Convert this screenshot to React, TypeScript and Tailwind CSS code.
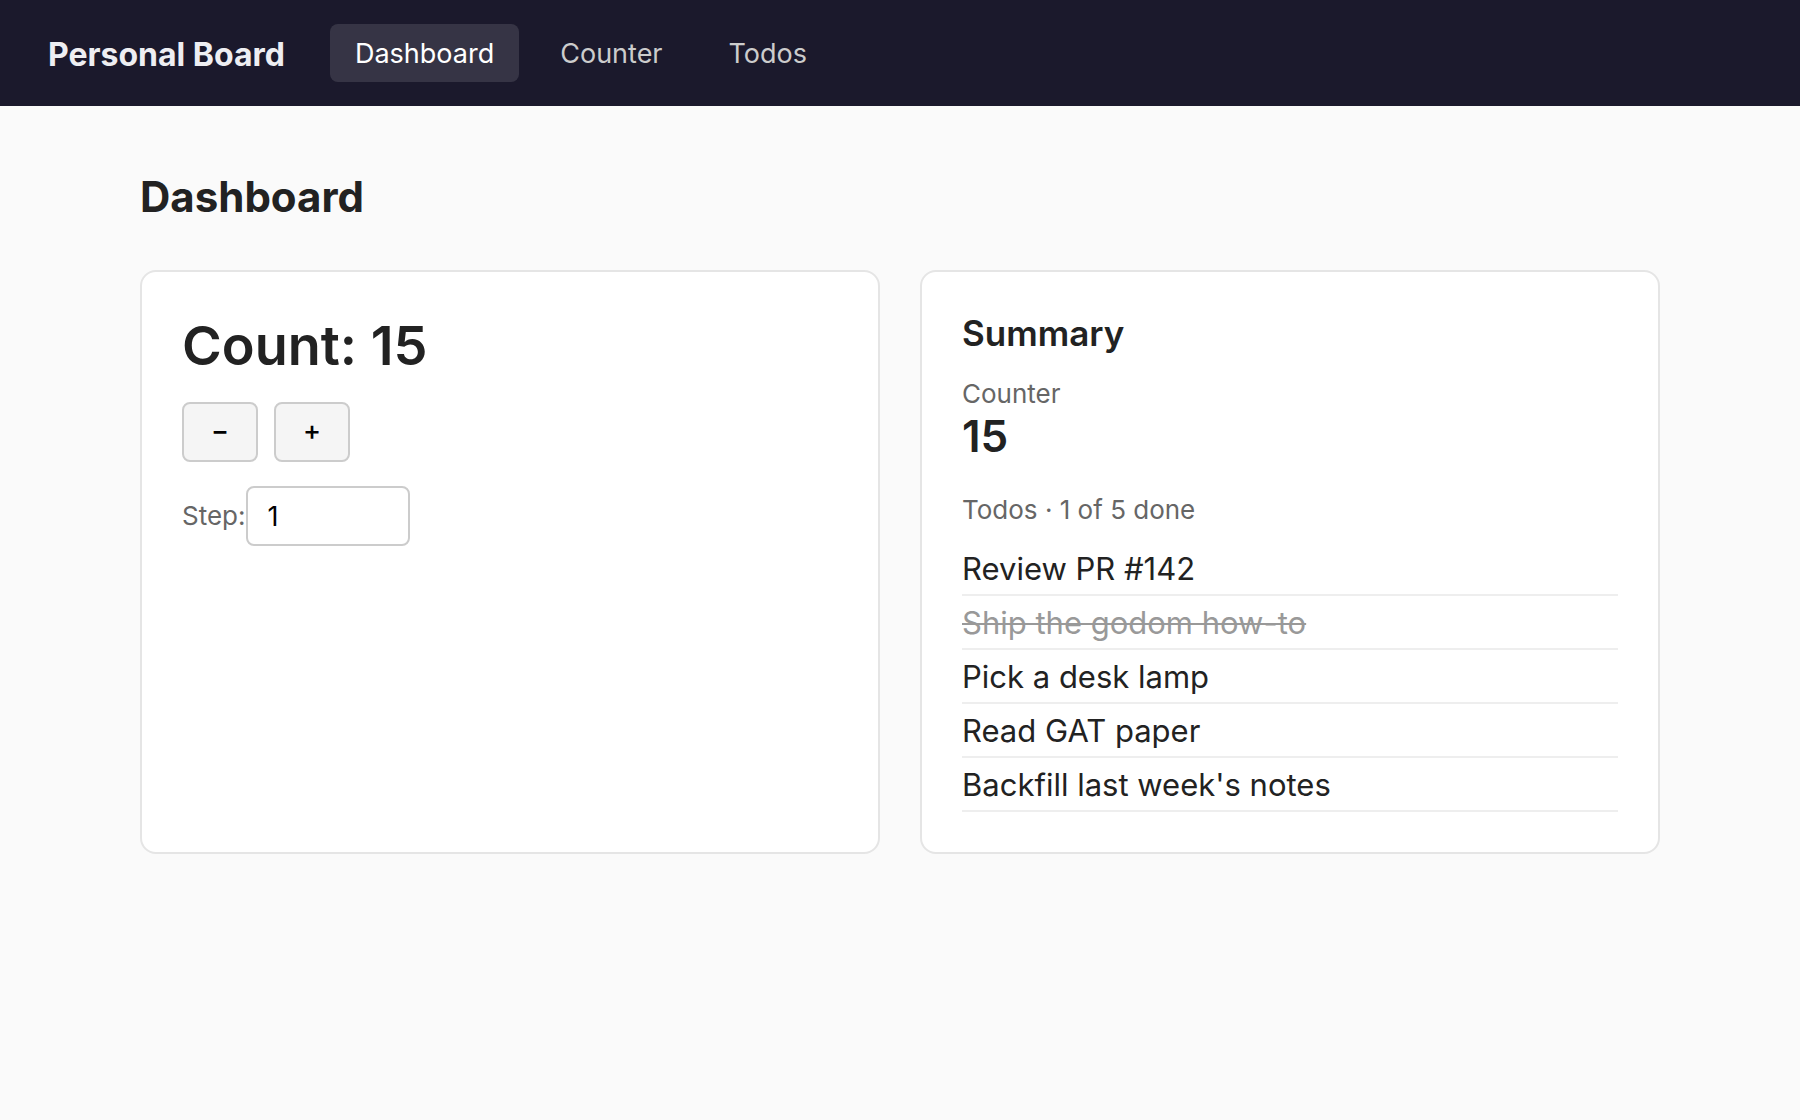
import { useState } from 'react';
import clsx from 'clsx';

const navItems = ['Dashboard', 'Counter', 'Todos'];

const todos = [
  { text: 'Review PR #142', done: false },
  { text: 'Ship the godom how-to', done: true },
  { text: 'Pick a desk lamp', done: false },
  { text: 'Read GAT paper', done: false },
  { text: "Backfill last week's notes", done: false },
];

const Navbar = () => (
  <nav className="flex items-center gap-[45px] bg-[#1b192c] px-12 py-6">
    <span className="pt-1 text-[32px] leading-[36px] font-bold text-[#eeeef2]">Personal Board</span>
    <div className="flex gap-4">
      {navItems.map((item) => (
        <a
          key={item}
          href={`#${item.toLowerCase()}`}
          className={clsx(
            'rounded-lg px-[25px] pt-[13px] pb-[11px] text-[27px] leading-[34px]',
            item === 'Dashboard' ? 'bg-white/12 text-white' : 'text-[#cccccc]'
          )}
        >
          {item}
        </a>
      ))}
    </div>
  </nav>
);

type CounterProps = {
  count: number;
  onChange: (count: number) => void;
};

const Counter = ({ count, onChange }: CounterProps) => {
  const [step, setStep] = useState(1);
  const buttonClass =
    'h-[60px] w-[76px] rounded-lg border-2 border-[#cccccc] bg-[#f5f5f5] pb-[2px] text-[27px] leading-[34px] font-medium text-black';

  return (
    <section className="rounded-2xl border-2 border-[#e5e5e5] bg-white p-10">
      <h2 className="mb-[22px] text-[54px] leading-[68px] font-semibold">Count: {count}</h2>
      <div className="mb-6 flex gap-4">
        <button type="button" aria-label="Decrease" className={buttonClass} onClick={() => onChange(count - step)}>
          −
        </button>
        <button type="button" aria-label="Increase" className={buttonClass} onClick={() => onChange(count + step)}>
          +
        </button>
      </div>
      <div className="flex items-center">
        <label htmlFor="step" className="text-[26px] leading-[32px] text-[#666666]">
          Step:
        </label>
        <input
          id="step"
          type="number"
          value={step}
          onChange={(e) => setStep(Number(e.target.value))}
          className="h-[60px] w-[164px] rounded-lg border-2 border-[#cccccc] bg-white px-5 text-[27px] leading-[34px] text-black"
        />
      </div>
    </section>
  );
};

const Summary = ({ count }: { count: number }) => {
  const done = todos.filter((todo) => todo.done).length;

  return (
    <section className="rounded-2xl border-2 border-[#e5e5e5] bg-white p-10">
      <h2 className="mb-6 text-[35px] leading-[42px] font-semibold">Summary</h2>
      <p className="text-[26px] leading-[32px] text-[#666666]">Counter</p>
      <p className="mb-8 text-[44px] leading-[52px] font-semibold">{count}</p>
      <p className="mb-4 text-[26px] leading-[32px] text-[#666666]">
        Todos · {done} of {todos.length} done
      </p>
      <ul>
        {todos.map((todo) => (
          <li
            key={todo.text}
            className={clsx(
              'border-b-2 border-[#eeeeee] pt-[9px] pb-[7px] text-[31px] leading-[36px]',
              todo.done && 'text-[#999999] line-through decoration-2'
            )}
          >
            {todo.text}
          </li>
        ))}
      </ul>
    </section>
  );
};

const App = () => {
  const [count, setCount] = useState(15);

  return (
    <div className="min-h-screen bg-[#fafafa] font-['Inter','Liberation_Sans',sans-serif] text-[#222222]">
      <Navbar />
      <main className="mx-auto max-w-[1520px] pt-16">
        <h1 className="mb-[46px] text-[42px] leading-[54px] font-bold">Dashboard</h1>
        <div className="grid grid-cols-2 gap-10">
          <Counter count={count} onChange={setCount} />
          <Summary count={count} />
        </div>
      </main>
    </div>
  );
};

export default App;
